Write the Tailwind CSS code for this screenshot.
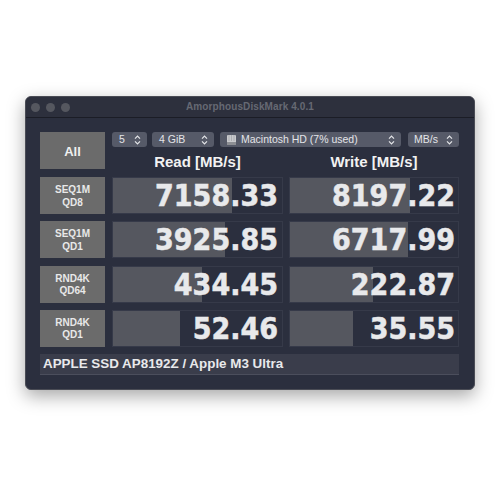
<!DOCTYPE html>
<html lang="en">
<head>
<meta charset="UTF-8">
<title>AmorphousDiskMark</title>
<script src="https://cdn.jsdelivr.net/npm/@tailwindcss/browser@4"></script>
</head>
<body class="bg-white w-[500px] h-[500px] overflow-hidden pt-[96px] pl-[25px] font-['Liberation_Sans',sans-serif]">
  <div class="w-[450px] h-[294px] bg-[#2b2f3e] rounded-[6px] border border-[#4a4c55] shadow-[0_6px_18px_rgba(0,0,0,0.35)] overflow-hidden">
    <!-- title bar -->
    <div class="relative h-[21px] flex items-center gap-[6px] pl-[5px] bg-[#2d303d] border-b border-[#1b1d26]">
      <span class="w-[9px] h-[9px] rounded-full bg-[#55575f]"></span>
      <span class="w-[9px] h-[9px] rounded-full bg-[#55575f]"></span>
      <span class="w-[9px] h-[9px] rounded-full bg-[#55575f]"></span>
      <span class="absolute inset-0 pb-[1px] flex items-center justify-center text-[10px] font-bold tracking-[0.1px] text-[#666973]">AmorphousDiskMark 4.0.1</span>
    </div>

    <div class="pl-[14px] pt-[14px] w-[433px]">
      <!-- top row -->
      <div class="flex gap-[7px] h-[37px]">
        <div class="w-[65px] shrink-0 bg-[#6b6b6b] flex items-center justify-center pt-[2px] text-[13px] font-bold text-[#f0f0f0]">All</div>
        <div class="flex-1">
          <div class="flex h-[15px] text-[10.5px] text-[#e4e5e8]">
            <div class="w-[35px] mr-[5px] bg-[#565a68] rounded-[3px] flex items-center justify-between pl-[7px] pr-[6px]">
              <span>5</span>
              <svg width="7" height="10" viewBox="0 0 7 10" fill="none" stroke="#e4e5e8" stroke-width="1.2"><path d="M1 3.6 3.5 1 6 3.6M1 6.4 3.5 9 6 6.4"/></svg>
            </div>
            <div class="w-[62px] mr-[6px] bg-[#565a68] rounded-[3px] flex items-center justify-between pl-[7px] pr-[6px]">
              <span>4 GiB</span>
              <svg width="7" height="10" viewBox="0 0 7 10" fill="none" stroke="#e4e5e8" stroke-width="1.2"><path d="M1 3.6 3.5 1 6 3.6M1 6.4 3.5 9 6 6.4"/></svg>
            </div>
            <div class="w-[181px] mr-[7px] bg-[#565a68] rounded-[3px] flex items-center pl-[6px] pr-[6px]">
              <svg width="11" height="12" viewBox="0 0 11 12" class="mr-[4px]"><rect x="1" y="1" width="9" height="10" rx="1" fill="#c9cacd"/><rect x="1" y="8" width="9" height="3" fill="#8d8f94"/><path d="M3 1v6M5.5 1v6M8 1v6" stroke="#9a9ca1" stroke-width=".6"/></svg>
              <span>Macintosh HD (7% used)</span>
              <svg width="7" height="10" viewBox="0 0 7 10" fill="none" stroke="#e4e5e8" stroke-width="1.2" class="ml-auto"><path d="M1 3.6 3.5 1 6 3.6M1 6.4 3.5 9 6 6.4"/></svg>
            </div>
            <div class="w-[51px] bg-[#565a68] rounded-[3px] flex items-center justify-between pl-[6px] pr-[6px]">
              <span>MB/s</span>
              <svg width="7" height="10" viewBox="0 0 7 10" fill="none" stroke="#e4e5e8" stroke-width="1.2"><path d="M1 3.6 3.5 1 6 3.6M1 6.4 3.5 9 6 6.4"/></svg>
            </div>
          </div>
          <div class="flex gap-[6px] h-[22px] pt-[8px] items-center text-[15px] font-bold text-[#f2f2f2]">
            <div class="w-[171px] text-center">Read [MB/s]</div>
            <div class="w-[170px] text-center">Write [MB/s]</div>
          </div>
        </div>
      </div>

      <!-- results -->
      <div class="mt-[8px] flex flex-col gap-[7.3px] font-['DejaVu_Sans_Condensed','DejaVu_Sans',sans-serif]">
        <div class="flex gap-[7px] h-[37px]">
          <div class="w-[65px] shrink-0 bg-[#6b6b6b] flex flex-col items-center justify-center pt-[2px] text-[10px] leading-[12.5px] font-bold text-[#e8e8e8] font-['Liberation_Sans',sans-serif]"><span>SEQ1M</span><span>QD8</span></div>
          <div class="relative w-[171px] border border-[#363a49]">
            <div class="absolute inset-y-0 left-0 bg-[#55575f]" style="width:119px"></div>
            <div class="relative h-full flex items-center justify-end pr-[4px] text-[30px] font-bold text-[#e8e9eb] [-webkit-text-stroke:0.5px_#e8e9eb]">7158.33</div>
          </div>
          <div class="relative w-[170px] ml-[-1px] border border-[#363a49]">
            <div class="absolute inset-y-0 left-0 bg-[#55575f]" style="width:120px"></div>
            <div class="relative h-full flex items-center justify-end pr-[3px] text-[30px] font-bold text-[#e8e9eb] [-webkit-text-stroke:0.5px_#e8e9eb]">8197.22</div>
          </div>
        </div>
        <div class="flex gap-[7px] h-[37px]">
          <div class="w-[65px] shrink-0 bg-[#6b6b6b] flex flex-col items-center justify-center pt-[2px] text-[10px] leading-[12.5px] font-bold text-[#e8e8e8] font-['Liberation_Sans',sans-serif]"><span>SEQ1M</span><span>QD1</span></div>
          <div class="relative w-[171px] border border-[#363a49]">
            <div class="absolute inset-y-0 left-0 bg-[#55575f]" style="width:112px"></div>
            <div class="relative h-full flex items-center justify-end pr-[4px] text-[30px] font-bold text-[#e8e9eb] [-webkit-text-stroke:0.5px_#e8e9eb]">3925.85</div>
          </div>
          <div class="relative w-[170px] ml-[-1px] border border-[#363a49]">
            <div class="absolute inset-y-0 left-0 bg-[#55575f]" style="width:118px"></div>
            <div class="relative h-full flex items-center justify-end pr-[3px] text-[30px] font-bold text-[#e8e9eb] [-webkit-text-stroke:0.5px_#e8e9eb]">6717.99</div>
          </div>
        </div>
        <div class="flex gap-[7px] h-[37px]">
          <div class="w-[65px] shrink-0 bg-[#6b6b6b] flex flex-col items-center justify-center pt-[2px] text-[10px] leading-[12.5px] font-bold text-[#e8e8e8] font-['Liberation_Sans',sans-serif]"><span>RND4K</span><span>QD64</span></div>
          <div class="relative w-[171px] border border-[#363a49]">
            <div class="absolute inset-y-0 left-0 bg-[#55575f]" style="width:89px"></div>
            <div class="relative h-full flex items-center justify-end pr-[4px] text-[30px] font-bold text-[#e8e9eb] [-webkit-text-stroke:0.5px_#e8e9eb]">434.45</div>
          </div>
          <div class="relative w-[170px] ml-[-1px] border border-[#363a49]">
            <div class="absolute inset-y-0 left-0 bg-[#55575f]" style="width:83px"></div>
            <div class="relative h-full flex items-center justify-end pr-[3px] text-[30px] font-bold text-[#e8e9eb] [-webkit-text-stroke:0.5px_#e8e9eb]">222.87</div>
          </div>
        </div>
        <div class="flex gap-[7px] h-[37px]">
          <div class="w-[65px] shrink-0 bg-[#6b6b6b] flex flex-col items-center justify-center pt-[2px] text-[10px] leading-[12.5px] font-bold text-[#e8e8e8] font-['Liberation_Sans',sans-serif]"><span>RND4K</span><span>QD1</span></div>
          <div class="relative w-[171px] border border-[#363a49]">
            <div class="absolute inset-y-0 left-0 bg-[#55575f]" style="width:67px"></div>
            <div class="relative h-full flex items-center justify-end pr-[4px] text-[30px] font-bold text-[#e8e9eb] [-webkit-text-stroke:0.5px_#e8e9eb]">52.46</div>
          </div>
          <div class="relative w-[170px] ml-[-1px] border border-[#363a49]">
            <div class="absolute inset-y-0 left-0 bg-[#55575f]" style="width:63px"></div>
            <div class="relative h-full flex items-center justify-end pr-[3px] text-[30px] font-bold text-[#e8e9eb] [-webkit-text-stroke:0.5px_#e8e9eb]">35.55</div>
          </div>
        </div>
      </div>

      <!-- drive name -->
      <div class="mt-[7px] h-[21px] w-[419px] bg-[#3a3d4b] border-b border-[#4b4e5c] flex items-center pl-[3px] text-[13.4px] font-bold text-[#e8e9eb]">APPLE SSD AP8192Z / Apple M3 Ultra</div>
    </div>
  </div>
</body>
</html>
